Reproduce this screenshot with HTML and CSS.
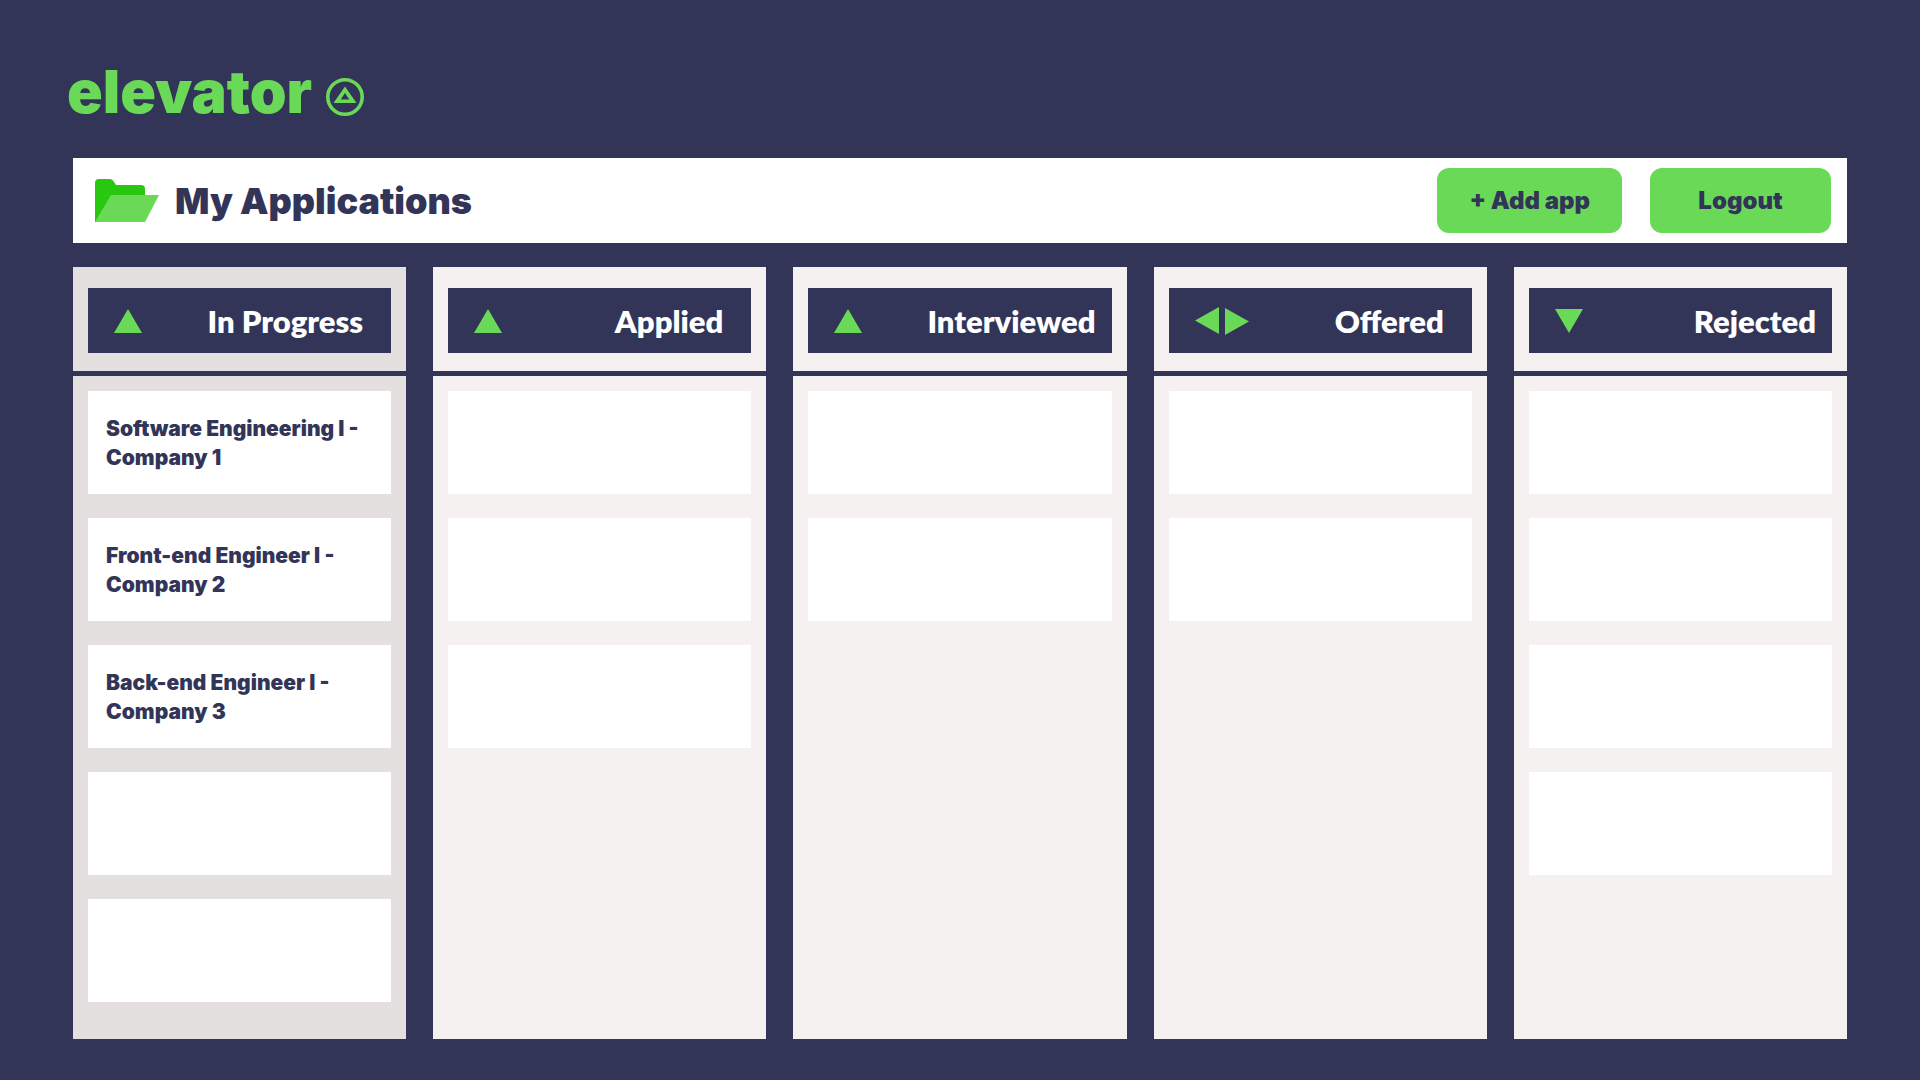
FILE: index.html
```html
<!DOCTYPE html>
<html lang="en">
<head>
<meta charset="utf-8">
<meta name="viewport" content="width=device-width, initial-scale=1">
<title>elevator - My Applications</title>
<link rel="stylesheet" href="styles.css">
</head>
<body>
<header class="brand">
  <span class="brand-name">elevator</span>
  <svg class="brand-mark" viewBox="0 0 38 38" aria-hidden="true">
    <circle cx="19" cy="19" r="17.2" fill="none" stroke="currentColor" stroke-width="3.6"/>
    <path fill="currentColor" fill-rule="evenodd" d="M19 8.5 30.5 25h-23zM19 15l-4.3 6.6h8.6z"/>
  </svg>
</header>

<main>
  <div class="toolbar">
    <svg class="folder" viewBox="0 0 64 44" aria-hidden="true">
      <path fill="#28c810" d="M0 43V4Q0 0 4 0H15Q17 0 18.500 2L21 6H46Q50 6 50 10V20L4 43z"/>
      <path fill="#6ad958" d="M16 16H64L50 43H0z"/>
    </svg>
    <h1>My Applications</h1>
    <div class="actions">
      <button type="button" class="button">+ Add app</button>
      <button type="button" class="button">Logout</button>
    </div>
  </div>

  <div class="board">
    <section class="column column-active">
      <div class="column-head"><div class="column-label">
        <svg class="arrow" viewBox="0 0 28 24" aria-hidden="true"><path d="M14 0 28 24H0z"/></svg>
        <h2>In Progress</h2>
      </div></div>
      <ul class="cards">
        <li class="card">Software Engineering I - Company 1</li>
        <li class="card">Front-end Engineer I -<br>Company 2</li>
        <li class="card">Back-end Engineer I -<br>Company 3</li>
        <li class="card"></li>
        <li class="card"></li>
      </ul>
    </section>

    <section class="column">
      <div class="column-head"><div class="column-label">
        <svg class="arrow" viewBox="0 0 28 24" aria-hidden="true"><path d="M14 0 28 24H0z"/></svg>
        <h2>Applied</h2>
      </div></div>
      <ul class="cards">
        <li class="card"></li>
        <li class="card"></li>
        <li class="card"></li>
      </ul>
    </section>

    <section class="column">
      <div class="column-head"><div class="column-label column-label-tight">
        <svg class="arrow" viewBox="0 0 28 24" aria-hidden="true"><path d="M14 0 28 24H0z"/></svg>
        <h2>Interviewed</h2>
      </div></div>
      <ul class="cards">
        <li class="card"></li>
        <li class="card"></li>
      </ul>
    </section>

    <section class="column">
      <div class="column-head"><div class="column-label">
        <svg class="arrow arrow-pair" viewBox="0 0 54 28" aria-hidden="true"><path d="M0 13.500 24 0V27zM30 1 54 14.500 30 28z"/></svg>
        <h2>Offered</h2>
      </div></div>
      <ul class="cards">
        <li class="card"></li>
        <li class="card"></li>
      </ul>
    </section>

    <section class="column">
      <div class="column-head"><div class="column-label column-label-tight">
        <svg class="arrow" viewBox="0 0 28 24" aria-hidden="true"><path d="M0 0H28L14 24z"/></svg>
        <h2>Rejected</h2>
      </div></div>
      <ul class="cards">
        <li class="card"></li>
        <li class="card"></li>
        <li class="card"></li>
        <li class="card"></li>
      </ul>
    </section>
  </div>
</main>
</body>
</html>
```
FILE: styles.css
```css
:root {
  --navy: #323558;
  --green: #6ad958;
}

* {
  box-sizing: border-box;
}

body {
  display: flex;
  flex-direction: column;
  min-height: 100vh;
  margin: 0;
  padding: 56px 73px 41px;
  background: var(--navy);
  color: var(--navy);
  font-family: "Inter", sans-serif;
  font-weight: 900;
}

h1,
h2 {
  margin: 0;
}

.brand {
  display: flex;
  align-items: flex-end;
  gap: 14px;
  padding-bottom: 30px;
  margin-left: -6px;
  color: var(--green);
}

.brand-name {
  font-size: 59px;
  line-height: 72px;
}

.brand-mark {
  width: 38px;
  height: 38px;
  margin-bottom: 12px;
}

main {
  display: flex;
  flex: 1;
  flex-direction: column;
  gap: 24px;
}

.toolbar {
  display: flex;
  align-items: center;
  gap: 16px;
  min-height: 85px;
  padding: 10px 16px 10px 22px;
  background: #fff;
}

.folder {
  width: 64px;
  height: 44px;
}

h1 {
  font-size: 36px;
  font-weight: 900;
  line-height: 44px;
}

.actions {
  display: flex;
  gap: 28px;
  margin-left: auto;
}

.button {
  min-width: 181px;
  height: 65px;
  padding: 0 32px;
  border: 0;
  border-radius: 12px;
  background: var(--green);
  color: inherit;
  font: inherit;
  font-size: 24px;
}

.board {
  display: grid;
  flex: 1;
  grid-template-columns: repeat(5, 1fr);
  gap: 27px;
}

.column {
  background: #f5f1f0;
}

.column-active {
  background: #e4e0df;
}

.column-head {
  padding: 21px 15px 18px;
  border-bottom: 5px solid var(--navy);
}

.column-label {
  display: flex;
  align-items: center;
  justify-content: space-between;
  height: 65px;
  padding: 0 28px 0 26px;
  background: var(--navy);
  color: #fff;
}

.column-label-tight {
  padding-right: 16px;
}

h2 {
  font-family: "Lato", sans-serif;
  font-size: 31px;
  font-weight: 800;
  line-height: 40px;
}

.arrow {
  width: 28px;
  height: 24px;
  fill: var(--green);
}

.arrow-pair {
  width: 54px;
  height: 28px;
}

.cards {
  display: flex;
  flex-direction: column;
  gap: 24px;
  margin: 0;
  padding: 15px;
  list-style: none;
}

.card {
  display: flex;
  align-items: center;
  min-height: 103px;
  padding: 12px 18px;
  background: #fff;
  font-size: 21px;
  line-height: 29px;
}
```
